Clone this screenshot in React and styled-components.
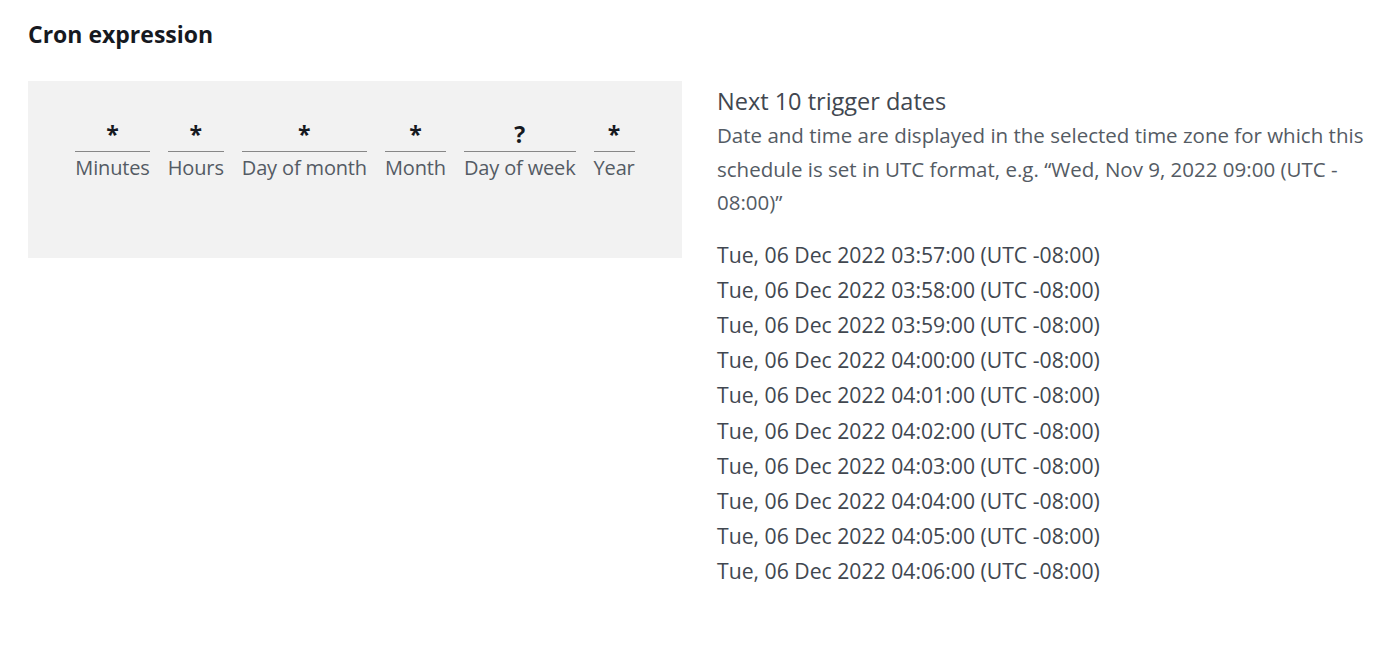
import React from 'react'
import styled, { createGlobalStyle } from 'styled-components'

const fields = [
  { value: '*', label: 'Minutes' },
  { value: '*', label: 'Hours' },
  { value: '*', label: 'Day of month' },
  { value: '*', label: 'Month' },
  { value: '?', label: 'Day of week' },
  { value: '*', label: 'Year' },
]

const triggers = [
  '03:57:00',
  '03:58:00',
  '03:59:00',
  '04:00:00',
  '04:01:00',
  '04:02:00',
  '04:03:00',
  '04:04:00',
  '04:05:00',
  '04:06:00',
]

export default function App() {
  return (
    <>
      <GlobalStyle />
      <Page>
        <Title>Cron expression</Title>
        <Layout>
          <ExpressionBox>
            <FieldRow>
              {fields.map((f) => (
                <Field key={f.label}>
                  <FieldValue>{f.value}</FieldValue>
                  <FieldLabel>{f.label}</FieldLabel>
                </Field>
              ))}
            </FieldRow>
          </ExpressionBox>
          <Dates>
            <DatesTitle>Next 10 trigger dates</DatesTitle>
            <DatesHint>
              Date and time are displayed in the selected time zone for which this
              schedule is set in UTC format, e.g. “Wed, Nov 9, 2022 09:00 (UTC -
              08:00)”
            </DatesHint>
            <DateList>
              {triggers.map((t) => (
                <DateItem key={t}>Tue, 06 Dec 2022 {t} (UTC -08:00)</DateItem>
              ))}
            </DateList>
          </Dates>
        </Layout>
      </Page>
    </>
  )
}

const GlobalStyle = createGlobalStyle`
  body {
    margin: 0;
    background: #ffffff;
    font-family: 'Open Sans', 'Noto Sans', sans-serif;
  }
`

const Page = styled.div`
  padding: 19px 28px 0;
`

const Title = styled.h2`
  margin: 0;
  font-size: 23px;
  line-height: 30px;
  font-weight: 700;
  color: #16191f;
`

const Layout = styled.div`
  display: grid;
  grid-template-columns: 654px 1fr;
  column-gap: 35px;
  margin-top: 32px;
  align-items: start;
`

const ExpressionBox = styled.div`
  background: #f2f2f2;
  height: 177px;
  box-sizing: border-box;
  padding-top: 36px;
  display: flex;
  justify-content: center;
`

const FieldRow = styled.div`
  display: flex;
  gap: 18px;
  align-items: flex-start;
`

const Field = styled.div`
  display: flex;
  flex-direction: column;
  align-items: stretch;
`

const FieldValue = styled.div`
  text-align: center;
  font-size: 23px;
  font-weight: 700;
  line-height: 34px;
  color: #16191f;
  border-bottom: 1.5px solid #878787;
`

const FieldLabel = styled.div`
  font-size: 20px;
  line-height: 31px;
  color: #545b64;
  white-space: nowrap;
  letter-spacing: -0.15px;
`

const Dates = styled.div`
  display: flex;
  flex-direction: column;
  margin-top: 4px;
`

const DatesTitle = styled.div`
  font-size: 23.5px;
  line-height: 32px;
  color: #414750;
`

const DatesHint = styled.div`
  margin-top: 2px;
  font-size: 20.5px;
  line-height: 33.5px;
  color: #545b64;
  max-width: 660px;
`

const DateList = styled.div`
  display: flex;
  flex-direction: column;
  margin-top: 17px;
`

const DateItem = styled.div`
  font-size: 21.2px;
  line-height: 35.2px;
  color: #414750;
`
